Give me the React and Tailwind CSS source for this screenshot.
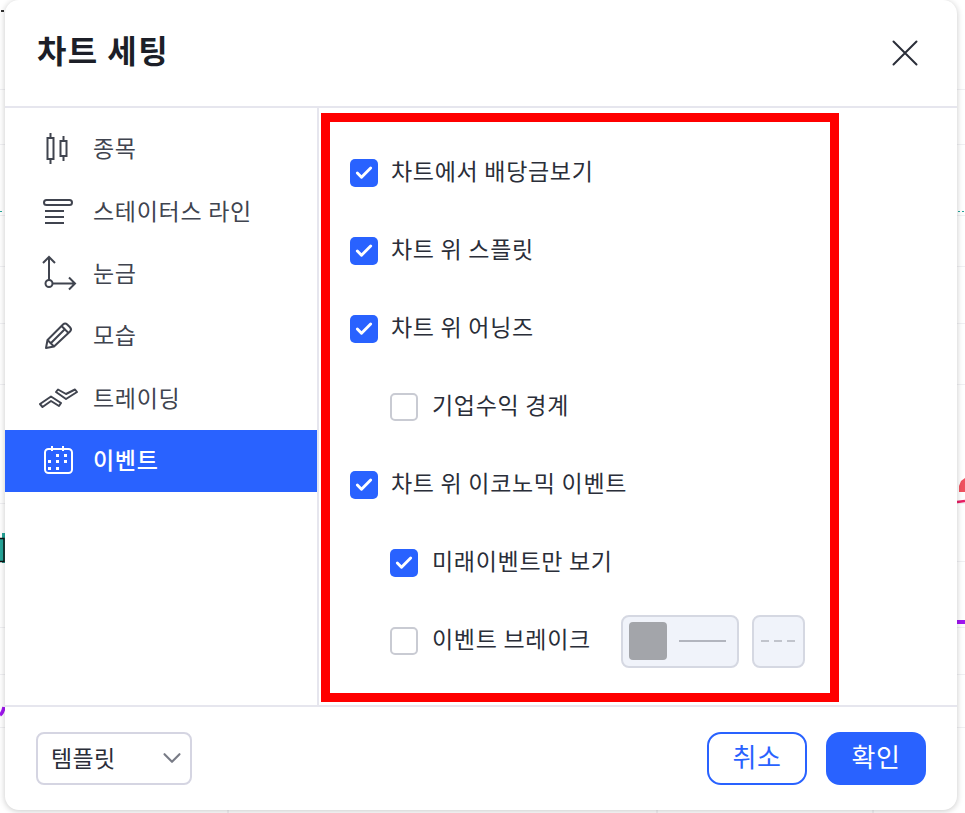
import React from 'react';
import { ChevronDown, Check } from 'lucide-react';

const FONT = { fontFamily: '"Noto Sans CJK KR", "Noto Sans", sans-serif' };

// --- ICONS ---
const CandleIcon = () => (
  <svg width="36" height="36" viewBox="0 0 36 36" fill="none" stroke="currentColor" strokeWidth="2">
    <rect x="8.500" y="7" width="6" height="21" />
    <path d="M11.500 2v5M11.500 28v5" />
    <rect x="21.500" y="10" width="6" height="15" />
    <path d="M24.500 5v5M24.500 25v5" />
  </svg>
);
const StatusIcon = () => (
  <svg width="36" height="36" viewBox="0 0 36 36" fill="none" stroke="currentColor" strokeWidth="2">
    <rect x="5" y="6" width="28" height="5" rx="2.500" />
    <path d="M6 17h19M6 23h19M6 29h19" />
  </svg>
);
const ScaleIcon = () => (
  <svg width="38" height="38" viewBox="0 0 38 38" fill="none" stroke="currentColor" strokeWidth="2">
    <path d="M10 25V2M4 8l6-6 6 6" />
    <circle cx="10" cy="28.500" r="3.500" />
    <path d="M14 28.500h22M30 22.500l6 6-6 6" />
  </svg>
);
const PencilIcon = () => (
  <svg width="36" height="36" viewBox="0 0 36 36" fill="none" stroke="currentColor" strokeWidth="2" strokeLinejoin="round">
    <path d="M7 30l1.500-8L24 6.500a3 3 0 0 1 4.200 0l2.800 2.800a3 3 0 0 1 0 4.200L15 28.500z" />
    <path d="M8.500 22l6.500 6.500M22.500 8l7 7M12 25l14.500-14.500" />
  </svg>
);
const TradingIcon = () => (
  <svg width="40" height="36" viewBox="0 0 40 36" fill="none" stroke="currentColor" strokeWidth="2" strokeLinejoin="round">
    <path d="M1 23l11-7.500 10 6.500-2 3-8-5-8.500 6z" />
    <path d="M17 11l2-2.500 8 4.500 9-4.500 2 2.500-11 7z" />
  </svg>
);
const CalendarIcon = () => (
  <svg width="36" height="36" viewBox="0 0 36 36" fill="none" stroke="currentColor" strokeWidth="2">
    <rect x="6" y="6" width="27" height="24" rx="3.500" />
    <path d="M13 3v5M24 3v5" />
    <g fill="currentColor" stroke="none">
      <rect x="17" y="11" width="3" height="3" /><rect x="25" y="11" width="3" height="3" />
      <rect x="9" y="17" width="3" height="3" /><rect x="17" y="17" width="3" height="3" /><rect x="25" y="17" width="3" height="3" />
      <rect x="9" y="24" width="3" height="3" /><rect x="17" y="24" width="3" height="3" />
    </g>
  </svg>
);
const CloseIcon = () => (
  <svg width="26" height="26" viewBox="0 0 26 26" fill="none" stroke="currentColor" strokeWidth="2" strokeLinecap="round">
    <path d="M1.500 1.500l23 23M24.500 1.500l-23 23" />
  </svg>
);

// the chart that shows around the dialog
const GRID_Y = [89, 144, 215, 266, 323, 384, 503, 561, 627, 674, 727];
const ChartBehind = () => (
  <svg width="965" height="813" className="absolute left-0 top-0">
    {GRID_Y.map(y => <path key={y} d={`M0 ${y}.5H965`} stroke="#f0f0f3" />)}
    <path d="M228 810v3M657 810v3M873 810v3" stroke="#e4e4e8" />
    <rect x="1" y="10" width="3" height="2" fill="#333" />
    <rect x="2" y="533" width="3" height="30" fill="#26a69a" />
    <rect x="-2" y="538.500" width="6" height="23" fill="#26a69a" stroke="#111" strokeWidth="1.500" />
    <path d="M4 707q-1 6-4 8" fill="none" stroke="#a016f0" strokeWidth="3.500" />
    <path d="M965 478l-4 3-2 5v6h6z" fill="#ef5360" />
    <path d="M957 502l8-1" fill="none" stroke="#e91e63" strokeWidth="2.500" />
    <rect x="957" y="620" width="8" height="4" fill="#a016f0" />
    <path d="M958 211.500h7" stroke="#26a69a" strokeDasharray="2 2" />
    <path d="M0 211.500h3" stroke="#26a69a" strokeDasharray="2 2" />
  </svg>
);

const NAV_ITEMS = [
  { label: '종목', icon: <CandleIcon /> },
  { label: '스테이터스 라인', icon: <StatusIcon /> },
  { label: '눈금', icon: <ScaleIcon /> },
  { label: '모습', icon: <PencilIcon /> },
  { label: '트레이딩', icon: <TradingIcon /> },
  { label: '이벤트', icon: <CalendarIcon />, active: true },
];

const Checkbox = ({ checked }) => (
  <div className={`w-7 h-7 rounded-[5px] flex items-center justify-center shrink-0 ${checked ? 'bg-[#2962ff]' : 'bg-white border-2 border-[#c9cbd3]'}`}>
    {checked && <Check size={20} strokeWidth={3.5} className="text-white" />}
  </div>
);

const Row = ({ label, checked, indent, children }) => (
  <div className={`h-[78px] flex items-center ${indent ? 'pl-[40px]' : ''}`}>
    <Checkbox checked={checked} />
    <span className={`mb-[6px] text-[23px] leading-none tracking-[0.7px] text-[#2a2e39] whitespace-nowrap ${indent ? 'ml-[14px]' : 'ml-[13px]'}`}>{label}</span>
    {children}
  </div>
);

// --- MAIN APP ---
export default function App() {
  return (
    <div className="relative w-[965px] h-[813px] bg-white overflow-hidden" style={FONT}>
      <ChartBehind />

      <div className="absolute left-[5px] top-0 w-[952px] h-[810px] bg-white rounded-[14px] shadow-[0_1px_6px_rgba(0,0,0,0.22)] flex flex-col">
        <header className="h-[108px] shrink-0 flex items-center justify-between pl-[32px] pr-[39px] border-b-2 border-[#e6e6ee]">
          <h1 className="text-[32px] font-bold tracking-[1.4px] text-[#1c1f28] mb-2">차트 세팅</h1>
          <div className="text-[#2a2e39]"><CloseIcon /></div>
        </header>

        <div className="flex-1 flex min-h-0">
          <nav className="w-[314px] shrink-0 pt-[10px] border-r-2 border-[#e6e6ee]">
            {NAV_ITEMS.map(item => (
              <div key={item.label} className={`h-[62.4px] flex items-center ${item.active ? 'bg-[#2962ff] text-white font-medium' : 'text-[#40444f]'}`}>
                <div className="w-[88px] pl-[34px] shrink-0 flex items-center">{item.icon}</div>
                <span className="mb-[3px] text-[23px] leading-none tracking-[0.7px]">{item.label}</span>
              </div>
            ))}
          </nav>

          <div className="flex-1 pl-[2px] pt-[5px]">
            <div className="w-[518px] h-[589px] border-[9px] border-[#ff0000] pl-[20px] pt-[12px]">
              <Row label="차트에서 배당금보기" checked />
              <Row label="차트 위 스플릿" checked />
              <Row label="차트 위 어닝즈" checked />
              <Row label="기업수익 경계" indent />
              <Row label="차트 위 이코노믹 이벤트" checked />
              <Row label="미래이벤트만 보기" checked indent />
              <Row label="이벤트 브레이크" indent>
                <div className="ml-[30px] w-[118px] h-[53px] rounded-lg border-2 border-[#d5d8e2] bg-[#f0f3fa] flex items-center pl-[6px] gap-[12px]">
                  <div className="w-[38px] h-[38px] rounded bg-[#a3a5aa]" />
                  <div className="w-[47px] h-[2px] bg-[#b2b5be]" />
                </div>
                <div className="ml-[13px] w-[53px] h-[53px] rounded-lg border-2 border-[#d5d8e2] bg-[#f0f3fa] flex items-center justify-center">
                  <svg width="34" height="2"><path d="M0 1h34" stroke="#c1c4cc" strokeWidth="2" strokeDasharray="8 5" /></svg>
                </div>
              </Row>
            </div>
          </div>
        </div>

        <footer className="h-[105px] shrink-0 flex items-center pl-[31px] pr-[31px] pb-[1px] border-t-2 border-[#e6e6ee]">
          <div className="w-[156px] h-[53px] rounded-lg border-2 border-[#d5d5e2] flex items-center justify-between pl-[13px] pr-[3px]">
            <span className="mb-[2px] text-[23px] leading-none tracking-[0.3px] text-[#2a2e39]">템플릿</span>
            <ChevronDown size={30} strokeWidth={1.7} className="text-[#787b86]" />
          </div>
          <button className="ml-auto w-[100px] h-[53px] rounded-[14px] border-2 border-[#2962ff] bg-white text-[#2962ff] text-[26px] leading-none tracking-[0.5px] pb-[4px]">취소</button>
          <button className="ml-[19px] w-[100px] h-[53px] rounded-[14px] bg-[#2962ff] text-white text-[26px] leading-none tracking-[0.5px] pb-[4px]">확인</button>
        </footer>
      </div>
    </div>
  );
}
